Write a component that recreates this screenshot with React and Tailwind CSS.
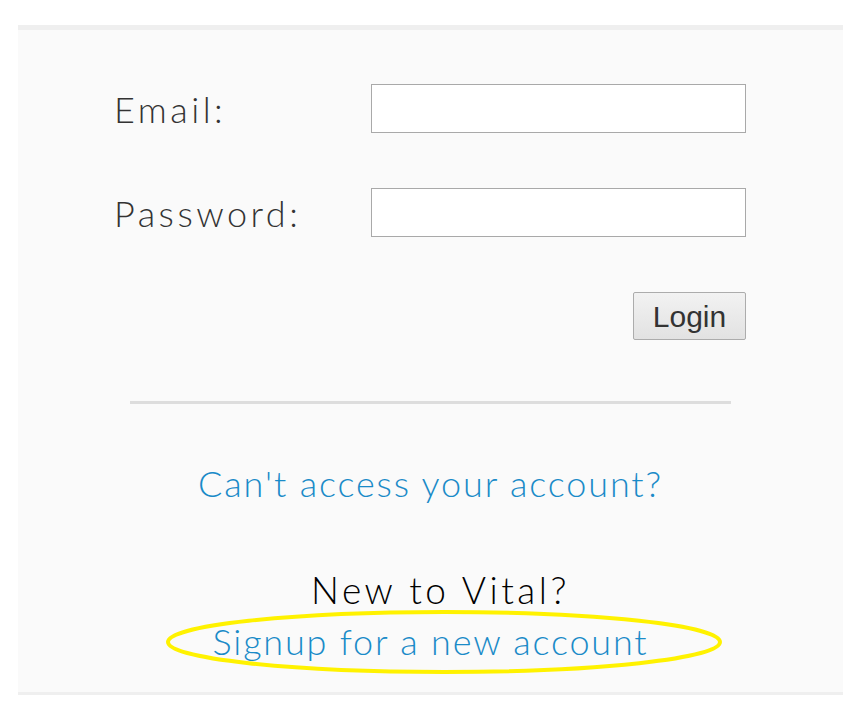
import React from 'react';

export default function App() {
    return (
        <div className="min-h-[714px] bg-white pt-[25px] pl-[18px]" style={{ fontFamily: 'Lato, "Open Sans", sans-serif' }}>
            <div className="w-[825px] h-[670px] bg-[#fafafa] border-t-[5px] border-b-[3px] border-[#efefef] relative">
                <div className="pt-[54px] pl-[96px]">
                    <div className="flex items-center h-[49px]">
                        <label className="w-[257px] text-[36px] font-light tracking-[3.5px] text-[#333] leading-none">Email:</label>
                        <input type="text" className="w-[375px] h-[49px] bg-white border border-[#a9a9a9] outline-none" />
                    </div>
                    <div className="flex items-center h-[49px] mt-[55px]">
                        <label className="w-[257px] text-[36px] font-light tracking-[3.5px] text-[#333] leading-none">Password:</label>
                        <input type="password" className="w-[375px] h-[49px] bg-white border border-[#a9a9a9] outline-none" />
                    </div>
                    <div className="flex justify-end w-[632px] mt-[55px]">
                        <button className="w-[113px] h-[48px] border border-[#acacac] rounded-[2px] bg-gradient-to-b from-[#f2f2f2] to-[#e2e2e2] text-[30px] text-[#333]" style={{ fontFamily: '"Liberation Sans", Arial, sans-serif' }}>
                            Login
                        </button>
                    </div>
                </div>
                <div className="mx-[112px] mt-[61px] h-[3px] bg-[#dddddd]" />
                <div className="text-center mt-[61px]">
                    <a href="#" className="text-[36px] font-light tracking-[1.85px] text-[#1a8bc8] leading-none">Can't access your account?</a>
                </div>
                <div className="text-center mt-[68px] pl-[20px] text-[37px] font-light tracking-[3.5px] text-black leading-none">New to Vital?</div>
                <div className="text-center mt-[15px] relative">
                    <a href="#" className="text-[36px] font-light tracking-[1.8px] text-[#1a8bc8] leading-none">Signup for a new account</a>
                    <svg className="absolute left-[146px] top-[-15px] pointer-events-none" width="560" height="68" viewBox="0 0 560 68">
                        <ellipse cx="280" cy="34" rx="276" ry="30" fill="none" stroke="#fff200" strokeWidth="4" />
                    </svg>
                </div>
            </div>
        </div>
    );
}
